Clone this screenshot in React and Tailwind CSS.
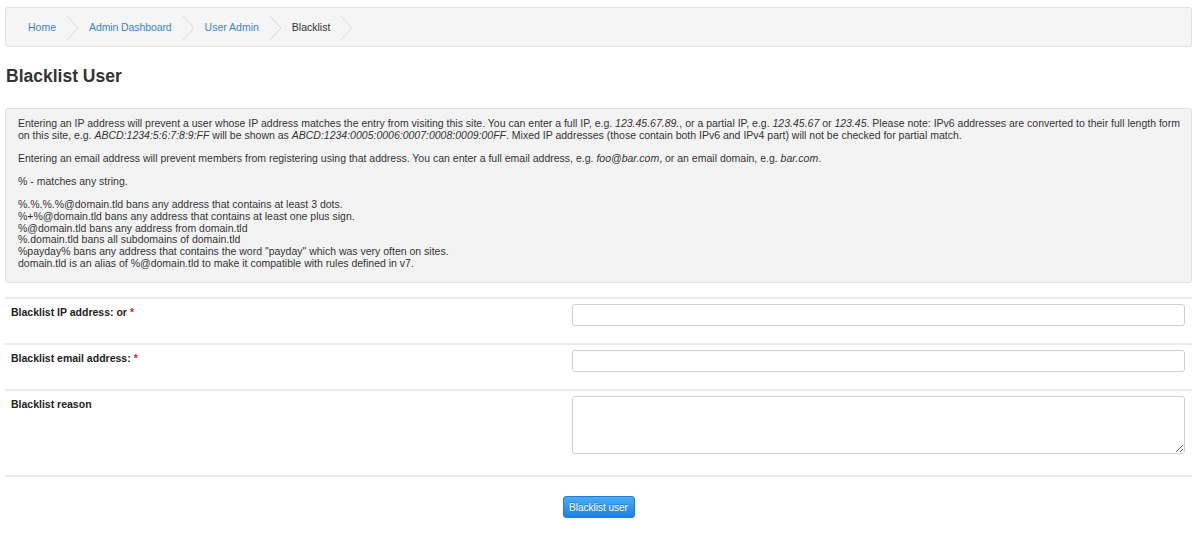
import React from "react";

function Chevron() {
  return (
    <svg width="13" height="26" viewBox="0 0 13 26" className="mx-[10px] shrink-0">
      <polyline points="0.5,0.5 12,13 0.5,25.5" fill="none" stroke="#d9d9d9" strokeWidth="1" />
    </svg>
  );
}

function Row({ label, required, children, pb }) {
  return (
    <div className={`flex border-t-2 border-[#ececec] pt-[5px] ${pb}`}>
      <div className="w-[567px] shrink-0 pl-[6px] pt-[1px] leading-[15px] font-bold text-[#222]">
        {label}
        {required && <span className="text-[#e02020] ml-[3px]">*</span>}
      </div>
      <div className="flex-1 pr-[7px]">{children}</div>
    </div>
  );
}

export default function App() {
  return (
    <div className="pl-[5px] pr-[8px] pt-[7px] pb-[16px] font-['Liberation_Sans',Arial,sans-serif] text-[10.5px] text-[#333] bg-white min-h-[535px]">
      <nav className="h-[40px] border border-[#e2e2e2] bg-[#f5f5f5] rounded-[3px] flex items-center pl-[22px] pt-[1px]">
        <a className="text-[#3b86cf]">Home</a>
        <Chevron />
        <a className="text-[#3b86cf] tracking-[-0.1px]">Admin Dashboard</a>
        <Chevron />
        <a className="text-[#3b86cf]">User Admin</a>
        <Chevron />
        <span className="text-[#333]">Blacklist</span>
        <Chevron />
      </nav>

      <h1 className="mt-[19px] pl-[1px] text-[17.5px] leading-[20px] font-bold text-[#333]">Blacklist User</h1>

      <div className="mt-[22px] h-[175px] border border-[#e3e3e3] bg-[#f3f3f3] rounded-[3px] pl-[12px] pr-[6px] pt-[9px] leading-[11.7px]">
        <p>
          Entering an IP address will prevent a user whose IP address matches the entry from visiting this site. You can enter a full IP, e.g. <i>123.45.67.89.</i>, or a partial IP, e.g. <i>123.45.67</i> or <i>123.45</i>. Please note: IPv6 addresses are converted to their full length form on this site, e.g. <i>ABCD:1234:5:6:7:8:9:FF</i> will be shown as <i>ABCD:1234:0005:0006:0007:0008:0009:00FF</i>. Mixed IP addresses (those contain both IPv6 and IPv4 part) will not be checked for partial match.
        </p>
        <p className="mt-[11.7px]">
          Entering an email address will prevent members from registering using that address. You can enter a full email address, e.g. <i>foo@bar.com</i>, or an email domain, e.g. <i>bar.com</i>.
        </p>
        <p className="mt-[11.7px]">% - matches any string.</p>
        <p className="mt-[11px]">
          %.%.%.%@domain.tld bans any address that contains at least 3 dots.
          <br />
          %+%@domain.tld bans any address that contains at least one plus sign.
          <br />
          %@domain.tld bans any address from domain.tld
          <br />
          %.domain.tld bans all subdomains of domain.tld
          <br />
          %payday% bans any address that contains the word "payday" which was very often on sites.
          <br />
          domain.tld is an alias of %@domain.tld to make it compatible with rules defined in v7.
        </p>
      </div>

      <div className="mt-[14px]">
        <Row label="Blacklist IP address: or" required pb="pb-[17px]">
          <input className="block w-full h-[22px] border border-[#cfcfcf] rounded-[3px] bg-white outline-none" />
        </Row>
        <Row label="Blacklist email address:" required pb="pb-[17px]">
          <input className="block w-full h-[22px] border border-[#cfcfcf] rounded-[3px] bg-white outline-none" />
        </Row>
        <Row label="Blacklist reason" pb="pb-[21px]">
          <textarea className="block w-full h-[58px] border border-[#cfcfcf] rounded-[3px] bg-white outline-none resize-y" />
        </Row>
        <div className="border-t-2 border-[#ececec] flex justify-center pt-[19px]">
          <button className="w-[72px] h-[22px] rounded-[3px] border border-[#2b78cc] bg-gradient-to-b from-[#48adf6] to-[#1f80e4] text-white text-[10px] [text-shadow:0_-1px_0_rgba(0,0,0,0.25)]">
            Blacklist user
          </button>
        </div>
      </div>
    </div>
  );
}
